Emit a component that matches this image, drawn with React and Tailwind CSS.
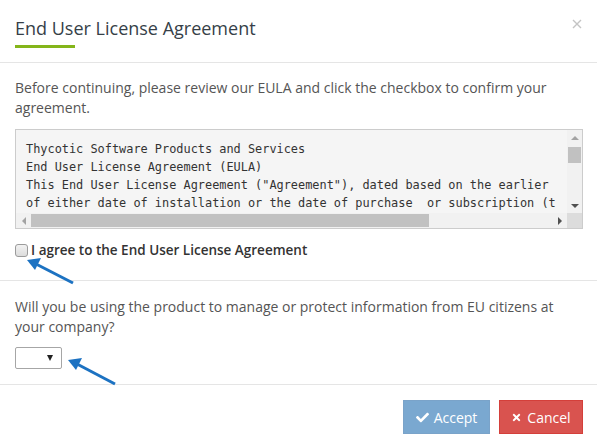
import { FaCheck, FaTimes } from 'react-icons/fa'

const eulaLines = [
  'Thycotic Software Products and Services',
  'End User License Agreement (EULA)',
  'This End User License Agreement ("Agreement"), dated based on the earlier',
  'of either date of installation or the date of purchase  or subscription (t',
]

function FakeTextarea() {
  return (
    <div className="flex h-[100px] w-full flex-col border border-[#cccccc] bg-[#f5f5f5]">
      <div className="flex min-h-0 flex-1">
        <div className="flex-1 overflow-hidden whitespace-pre pl-[10px] pt-[10px] text-[11.9px] leading-[18px] text-[#333]" style={{ fontFamily: '"DejaVu Sans Mono", "Liberation Mono", monospace' }}>
          {eulaLines.map((line) => (
            <div key={line}>{line}</div>
          ))}
        </div>
        {/* vertical scrollbar */}
        <div className="flex w-[15px] flex-col items-center bg-[#f1f1f1]">
          <div className="flex h-[15px] w-full items-center justify-center">
            <div className="h-0 w-0 border-x-[4px] border-b-[4px] border-x-transparent border-b-[#a3a3a3]" />
          </div>
          <div className="mt-[2px] h-[16px] w-[13px] bg-[#c1c1c1]" />
          <div className="flex-1" />
          <div className="flex h-[15px] w-full items-center justify-center">
            <div className="h-0 w-0 border-x-[4px] border-t-[4px] border-x-transparent border-t-[#505050]" />
          </div>
        </div>
      </div>
      {/* horizontal scrollbar */}
      <div className="flex h-[15px] bg-[#f1f1f1]">
        <div className="flex w-[15px] items-center justify-center">
          <div className="h-0 w-0 border-y-[4px] border-r-[4px] border-y-transparent border-r-[#a3a3a3]" />
        </div>
        <div className="flex flex-1 items-center">
          <div className="h-[13px] w-[398px] bg-[#c1c1c1]" />
        </div>
        <div className="flex w-[15px] items-center justify-center">
          <div className="h-0 w-0 border-y-[4px] border-l-[4px] border-y-transparent border-l-[#505050]" />
        </div>
        <div className="w-[15px] bg-[#dcdcdc]" />
      </div>
    </div>
  )
}

export default function App() {
  return (
    <div className="relative h-[448px] w-[597px] overflow-hidden bg-white text-[14px] text-[#555]" style={{ fontFamily: '"Open Sans", "Liberation Sans", sans-serif' }}>
      {/* Header */}
      <div className="relative border-b border-[#e5e5e5] pl-[15px] pr-[14px] pt-[15px] pb-[14px]">
        <h4 className="text-[18px] leading-[26px] text-[#363f48]">End User License Agreement</h4>
        <div className="mt-[4px] h-[3px] w-[60px] bg-[#84b51a]" />
        <svg className="absolute right-[15px] top-[19px]" width="10" height="10" viewBox="0 0 10 10">
          <path d="M1 1 L9 9 M9 1 L1 9" stroke="#c4c4c4" strokeWidth="1.4" fill="none" />
        </svg>
      </div>

      {/* Body: EULA */}
      <div className="border-b border-[#e5e5e5] pl-[15px] pr-[14px] pt-[15px] pb-[20px]">
        <p className="mb-[11px] leading-[20px]">
          Before continuing, please review our EULA and click the checkbox to confirm your agreement.
        </p>
        <FakeTextarea />
        <div className="mt-[11px] flex h-[20px] items-center">
          <div className="h-[13px] w-[13px] rounded-[3px] border border-[#9b9b9b] bg-gradient-to-b from-[#f2f2f2] to-[#dcdcdc]" />
          <span className="ml-[3px] text-[13.5px] font-semibold leading-[20px] text-[#333]">I agree to the End User License Agreement</span>
        </div>
      </div>

      {/* Body: EU question */}
      <div className="border-b border-[#e5e5e5] pl-[15px] pr-[14px] pt-[16px] pb-[15px]">
        <p className="leading-[20px]">
          Will you be using the product to manage or protect information from EU citizens at your company?
        </p>
        <div className="mt-[10px] flex h-[22px] w-[47px] items-center justify-end rounded-[2px] border border-[#a6a6a6] bg-white pr-[8px]">
          <div className="h-0 w-0 border-x-[3.5px] border-t-[6px] border-x-transparent border-t-[#222]" />
        </div>
      </div>

      {/* Footer */}
      <div className="flex justify-end gap-[9px] pl-[15px] pr-[14px] pt-[15px]">
        <button className="flex h-[34px] w-[87px] items-center justify-center gap-[5px] border border-[#7aa3c9] bg-[#7aa8d0] text-[14px] text-white">
          <FaCheck className="h-[13px] w-[13px]" />
          Accept
        </button>
        <button className="flex h-[34px] w-[84px] items-center justify-center gap-[5px] border border-[#d43f3a] bg-[#d9534f] text-[14px] text-white">
          <FaTimes className="h-[11px] w-[11px]" />
          Cancel
        </button>
      </div>

      {/* Annotation arrows */}
      <svg className="pointer-events-none absolute left-0 top-0" width="597" height="448">
        <line x1="73" y1="283" x2="36" y2="264" stroke="#1c72c2" strokeWidth="3" />
        <polygon points="27,260 41,258 35,270" fill="#1c72c2" />
        <line x1="115" y1="384" x2="77" y2="364" stroke="#1c72c2" strokeWidth="3" />
        <polygon points="68,360 82,358 76,370" fill="#1c72c2" />
      </svg>
    </div>
  )
}
